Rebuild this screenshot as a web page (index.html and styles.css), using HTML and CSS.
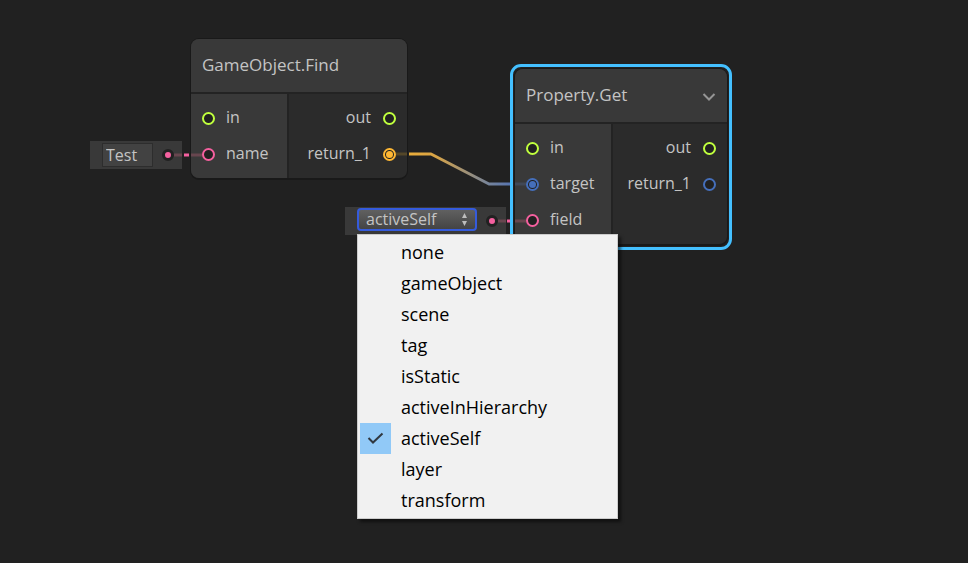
FILE: index.html
```html
<!DOCTYPE html>
<html lang="en">
<head>
<meta charset="utf-8">
<title>Node graph</title>
<link rel="stylesheet" href="styles.css">
</head>
<body>
<main class="canvas">
  <section class="node node-find">
    <header class="node-header"><h2>GameObject.Find</h2></header>
    <div class="node-body">
      <ul class="inputs">
        <li><i class="port flow"></i><span>in</span></li>
        <li><i class="port string"></i><label for="name-value">name</label></li>
      </ul>
      <ul class="outputs">
        <li><span>out</span><i class="port flow"></i></li>
        <li><span>return_1</span><i class="port object linked"></i></li>
      </ul>
    </div>
  </section>

  <section class="node node-get selected">
    <header class="node-header">
      <h2>Property.Get</h2>
      <button class="collapse" type="button" aria-label="Collapse">
        <svg width="14" height="10" viewBox="0 0 14 10"><path d="M1.500 2 L7 7.500 L12.500 2" fill="none" stroke="currentColor" stroke-width="2"/></svg>
      </button>
    </header>
    <div class="node-body">
      <ul class="inputs">
        <li><i class="port flow"></i><span>in</span></li>
        <li><i class="port target linked"></i><span>target</span></li>
        <li><i class="port string"></i><label for="field-value">field</label></li>
      </ul>
      <ul class="outputs">
        <li><span>out</span><i class="port flow"></i></li>
        <li><span>return_1</span><i class="port target"></i></li>
      </ul>
    </div>
  </section>

  <div class="widget widget-name">
    <input id="name-value" type="text" value="Test">
    <i class="dot"></i>
  </div>

  <div class="widget widget-field">
    <div class="popup">
      <select id="field-value">
        <option>none</option>
        <option>gameObject</option>
        <option>scene</option>
        <option>tag</option>
        <option>isStatic</option>
        <option>activeInHierarchy</option>
        <option selected>activeSelf</option>
        <option>layer</option>
        <option>transform</option>
      </select>
      <svg class="arrows" width="7" height="13" viewBox="0 0 7 13"><path d="M3.500 0 L6 5 H1Z M1 8 H6 L3.500 13Z" fill="#bdbdbd"/></svg>
    </div>
    <i class="dot"></i>
  </div>

  <svg class="edges" width="968" height="563" viewBox="0 0 968 563" fill="none" stroke-width="3">
    <defs>
      <linearGradient id="link" gradientUnits="userSpaceOnUse" x1="409" y1="0" x2="510" y2="0">
        <stop offset="0" stop-color="#eaad3a"/>
        <stop offset="0.250" stop-color="#d9a445"/>
        <stop offset="0.800" stop-color="#74839c"/>
        <stop offset="1" stop-color="#5875b0"/>
      </linearGradient>
    </defs>
    <path d="M396 154 H407" stroke="#544729"/>
    <path d="M409 154 H431 L489 184 H510" stroke="url(#link)" stroke-linejoin="round"/>
    <path d="M515 184 H526" stroke="#414856"/>
    <path d="M174 155 H182 M191 155 H202 M498 221 H506 M515 221 H526" stroke="#68464f"/>
    <path d="M184 155 H189 M507 221 H510" stroke="#f5609f"/>
  </svg>

  <ul class="menu">
    <li><button type="button">none</button></li>
    <li><button type="button">gameObject</button></li>
    <li><button type="button">scene</button></li>
    <li><button type="button">tag</button></li>
    <li><button type="button">isStatic</button></li>
    <li><button type="button">activeInHierarchy</button></li>
    <li><button type="button"><span class="check"><svg width="17" height="13" viewBox="0 0 17 13"><path d="M1.500 6 L6 10.500 L15.500 1.500" fill="none" stroke="#303840" stroke-width="2"/></svg></span>activeSelf</button></li>
    <li><button type="button">layer</button></li>
    <li><button type="button">transform</button></li>
  </ul>
</main>
</body>
</html>
```
FILE: styles.css
```css
* {
  box-sizing: border-box;
}

body {
  margin: 0;
  background: #212121;
  color: #c4c4c4;
  font: 16px/24px "Open Sans", "Noto Sans", sans-serif;
}

ul {
  margin: 0;
  padding: 0;
  list-style: none;
}

button,
input,
select {
  font: inherit;
  color: inherit;
}

.canvas {
  position: relative;
  min-height: 100vh;
  overflow: hidden;
}

/* Nodes */
.node {
  position: absolute;
  border: 1px solid #191919;
  border-bottom-width: 2px;
  border-radius: 9px;
  background: #2b2b2b;
}

.node-find {
  left: 190px;
  top: 38px;
  width: 218px;
}

.node-get {
  left: 514px;
  top: 68px;
  width: 214px;
}

.selected::after {
  content: "";
  position: absolute;
  inset: -5px -5px -6px;
  border: 3px solid #44c0ff;
  border-radius: 11px;
}

.node-header {
  display: flex;
  align-items: center;
  justify-content: space-between;
  height: 55px;
  padding: 0 11px;
  border-bottom: 2px solid #232323;
  border-radius: 8px 8px 0 0;
  background: #393939;
}

.node-header h2 {
  margin: 0;
  padding-bottom: 2px;
  font-size: 17px;
  font-weight: 400;
}

.collapse {
  display: flex;
  padding: 3px 0 0;
  border: 0;
  background: none;
  color: #959595;
}

.node-body {
  display: flex;
}

.inputs,
.outputs {
  padding: 6px 11px;
}

.inputs {
  width: 98px;
  border-right: 2px solid #232323;
  border-radius: 0 0 0 8px;
  background: #393939;
}

.outputs {
  flex: 1;
}

.node-body li {
  display: flex;
  align-items: center;
  gap: 12px;
  height: 36px;
}

.inputs li {
  gap: 11px;
}

.outputs li {
  justify-content: flex-end;
}

.node-body span,
.node-body label {
  padding-bottom: 2px;
}

.port {
  display: flex;
  align-items: center;
  justify-content: center;
  width: 13px;
  height: 13px;
  border: 2px solid;
  border-radius: 50%;
  background: #212121;
}

.linked::before {
  content: "";
  width: 7px;
  height: 7px;
  border-radius: 50%;
  background: currentColor;
}

.flow { color: #c0ff3e; }
.string { color: #f5609f; }
.object { color: #ffb833; }
.target { color: #456fbb; }

/* Inline value editors */
.widget {
  position: absolute;
  display: flex;
  align-items: center;
  justify-content: space-between;
  height: 28px;
  padding: 0 8px 0 12px;
  background: #393939;
}

.widget-name {
  left: 90px;
  top: 141px;
  width: 92px;
}

.widget-field {
  left: 345px;
  top: 207px;
  width: 161px;
}

.widget input {
  width: 51px;
  height: 24px;
  padding: 0 3px;
  border: 1px solid #2d2d2d;
  background: #424242;
}

.popup {
  position: relative;
  align-self: flex-start;
  padding-top: 1px;
  width: 120px;
}

.popup select {
  display: block;
  width: 100%;
  height: 23px;
  padding: 0 7px 2px;
  border: 2px solid #355bdc;
  border-radius: 4px;
  appearance: none;
  background: linear-gradient(#606060, #444444);
  line-height: 18px;
}

.arrows {
  position: absolute;
  right: 9px;
  top: 6px;
  pointer-events: none;
}

.dot {
  width: 12px;
  height: 12px;
  border: 3px solid #212121;
  border-radius: 50%;
  background: #f5609f;
}

.edges {
  position: absolute;
  left: 0;
  top: 0;
  pointer-events: none;
}

/* Open drop-down list */
.menu {
  position: absolute;
  left: 357px;
  top: 234px;
  width: 261px;
  padding: 2px;
  border: 1px solid #cccccc;
  background: #f1f1f1;
  box-shadow: 3px 3px 3px rgba(0, 0, 0, 0.5);
  color: #000000;
}

.menu button {
  display: flex;
  align-items: center;
  position: relative;
  width: 100%;
  height: 31px;
  padding: 0 0 2px 41px;
  border: 0;
  background: none;
  font-size: 18px;
}

.check {
  position: absolute;
  left: 0;
  top: 0;
  display: flex;
  align-items: center;
  justify-content: center;
  width: 31px;
  height: 31px;
  background: #91c9f7;
}
```
